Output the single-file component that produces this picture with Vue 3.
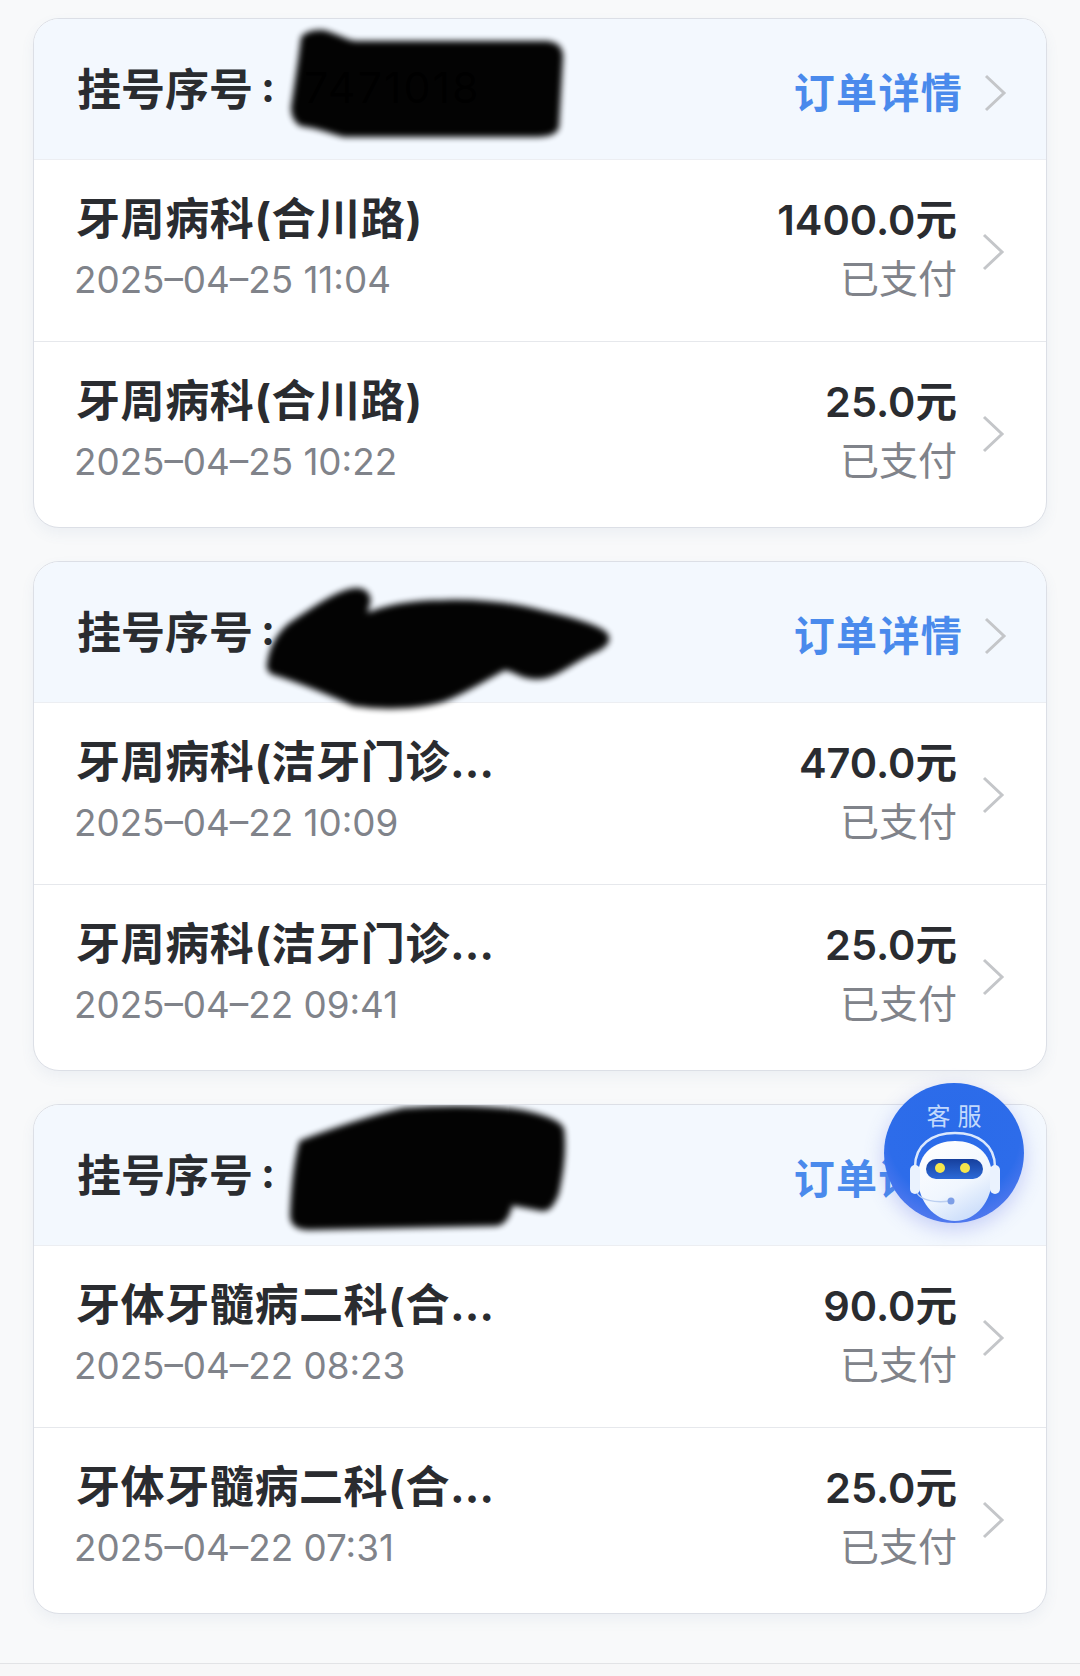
<template>
  <div class="page">
    <div v-for="card in cards" :key="card.shape" class="card">
      <div class="card-head">
        <span class="serial-label">挂号序号</span>
        <span class="serial-colon">:</span>
        <span class="serial-no">{{ card.serial }}</span>
        <span class="detail-link">订单详情</span>
        <svg class="chevron head-chevron" width="24" height="38" viewBox="0 0 24 38">
          <path d="M3 2 L21 19 L3 36" />
        </svg>
        <svg class="redact" viewBox="0 0 1014 142" width="1014" height="142">
          <path :d="card.shape" filter="url(#smear)" />
        </svg>
      </div>
      <div v-for="order in card.orders" :key="order.date" class="order">
        <div class="order-main">
          <div class="order-name">{{ order.name }}</div>
          <div class="order-date">{{ order.date }}</div>
        </div>
        <div class="order-side">
          <div class="order-price">{{ order.price }}</div>
          <div class="order-status">已支付</div>
        </div>
        <svg class="chevron row-chevron" width="24" height="38" viewBox="0 0 24 38">
          <path d="M3 2 L21 19 L3 36" />
        </svg>
      </div>
    </div>
    <div class="page-end"></div>

    <div class="service">
      <span class="service-text">客服</span>
      <svg width="140" height="140" viewBox="0 0 140 140">
        <defs>
          <linearGradient id="headFill" x1="0.2" y1="0" x2="0.7" y2="1">
            <stop offset="0" stop-color="#ffffff" />
            <stop offset="0.6" stop-color="#f0f6fe" />
            <stop offset="1" stop-color="#c9dcfa" />
          </linearGradient>
          <linearGradient id="visorFill" x1="0" y1="0" x2="0" y2="1">
            <stop offset="0" stop-color="#163f9c" />
            <stop offset="1" stop-color="#2c6ad8" />
          </linearGradient>
        </defs>
        <path d="M31 84 C31 62 48 50 71 50 C94 50 111 62 111 84" fill="none" stroke="#dbe8fd" stroke-width="2.5" />
        <path d="M71 58 C92 58 107 70 108 92 C109 118 92 138 71 138 C50 138 33 118 34 92 C35 70 50 58 71 58 Z" fill="url(#headFill)" />
        <rect x="42" y="76" width="57" height="20" rx="10" fill="url(#visorFill)" />
        <circle cx="56" cy="85" r="5" fill="#f5e64c" />
        <circle cx="81" cy="85" r="5" fill="#f5e64c" />
        <rect x="26" y="82" width="10" height="29" rx="5" fill="#eaf2fe" />
        <rect x="106" y="82" width="10" height="29" rx="5" fill="#eaf2fe" />
        <path d="M33 110 C37 117 50 120 66 118" fill="none" stroke="#bccff0" stroke-width="1.5" />
        <circle cx="67" cy="118" r="3.5" fill="#7d9ee6" />
      </svg>
    </div>

    <svg class="defs" width="0" height="0">
      <filter id="smear" x="-10%" y="-20%" width="120%" height="140%">
        <feGaussianBlur stdDeviation="3" />
      </filter>
    </svg>
  </div>
</template>

<script setup>
const cards = [
  {
    serial: '7471018',
    shape: 'M270 19 C276 14 282 14 288 14 C300 16 310 24 321 25 L513 25 C522 26 526 30 526 38 L522 108 C520 113 512 115 503 115 L310 115 C298 112 288 107 267 104 C262 100 260 95 260 89 L267 42 Z',
    orders: [
      { name: '牙周病科(合川路)', date: '2025–04–25 11:04', price: '1400.0元' },
      { name: '牙周病科(合川路)', date: '2025–04–25 10:22', price: '25.0元' }
    ]
  },
  {
    serial: '',
    shape: 'M236 102 C238 85 248 68 262 60 C280 48 305 30 322 29 C332 29 336 36 332 44 L329 56 C350 46 380 41 410 41 C445 40 480 44 510 52 C535 58 560 64 570 72 C576 78 570 84 555 90 C535 100 520 114 505 114 C490 116 482 106 470 105 C450 116 425 132 405 138 C380 145 345 145 320 141 C295 130 260 116 240 110 C236 108 235 106 236 102 Z',
    orders: [
      { name: '牙周病科(洁牙门诊部)', date: '2025–04–22 10:09', price: '470.0元' },
      { name: '牙周病科(洁牙门诊部)', date: '2025–04–22 09:41', price: '25.0元' }
    ]
  },
  {
    serial: '',
    shape: 'M268 38 C300 26 335 14 370 6 C410 3 450 3 487 8 C505 12 522 16 527 24 C530 45 526 70 522 88 C518 98 514 104 508 103 L476 97 C474 108 470 117 462 118 L275 122 C264 122 259 118 259 110 C260 85 262 60 268 38 Z',
    orders: [
      { name: '牙体牙髓病二科(合川路)', date: '2025–04–22 08:23', price: '90.0元' },
      { name: '牙体牙髓病二科(合川路)', date: '2025–04–22 07:31', price: '25.0元' }
    ]
  }
]
</script>

<style>
body {
  background: #f8f9fa;
}
</style>

<style scoped>
.page {
  position: relative;
  height: 1676px;
  box-sizing: border-box;
  padding: 18px 33px 0;
  background: #f8f9fa;
  font-family: Inter, "Noto Sans CJK SC", sans-serif;
  overflow: hidden;
}

.card {
  width: 1014px;
  box-sizing: border-box;
  margin-bottom: 33px;
  background: #fff;
  border: 1px solid #dcdfe6;
  border-radius: 26px;
  box-shadow: 0 6px 14px rgba(90, 110, 150, 0.07);
  overflow: hidden;
}

.card-head {
  position: relative;
  display: flex;
  align-items: center;
  height: 141px;
  box-sizing: border-box;
  padding: 0 39px 0 43px;
  background: #f3f8fe;
  border-bottom: 1px solid #eceef2;
}

.serial-label {
  margin-bottom: 4px;
  font: 700 44px "Noto Sans CJK SC", sans-serif;
  color: #2a2c30;
}

.serial-colon {
  margin: 0 0 6px 8px;
  font: 700 42px Inter, sans-serif;
  color: #2a2c30;
}

.serial-no {
  margin: 0 0 4px 29px;
  font: 400 43px Inter, sans-serif;
  letter-spacing: 2px;
  color: #111;
}

.detail-link {
  margin: 2px 0 0 auto;
  font: 700 41px "Noto Sans CJK SC", sans-serif;
  letter-spacing: 1.3px;
  color: #4a8aec;
}

.chevron {
  flex: none;
}

.chevron path {
  fill: none;
  stroke: #c4c6c9;
  stroke-width: 3;
}

.head-chevron {
  margin: 8px 0 0 20px;
}

.redact {
  position: absolute;
  left: 0;
  top: 0;
  overflow: visible;
  opacity: 0.985;
}

.redact path {
  fill: #000;
  stroke: #000;
  stroke-width: 6;
  stroke-linejoin: round;
}

.defs {
  position: absolute;
}

.order {
  display: flex;
  height: 182px;
  box-sizing: border-box;
  padding: 29px 41px 0 42px;
  border-bottom: 1px solid #e6e8ec;
}

.order:last-child {
  height: 185px;
  border-bottom: 0;
}

.order-main {
  width: 428px;
}

.order-name {
  overflow: hidden;
  font: 700 44px/60px Inter, "Noto Sans CJK SC", sans-serif;
  letter-spacing: 0.6px;
  color: #2a2c30;
  white-space: nowrap;
  text-overflow: ellipsis;
}

.order-date {
  margin: 9px 0 0 -2px;
  font: 400 36.8px/44px Inter, sans-serif;
  color: #80838a;
  white-space: nowrap;
}

.order-side {
  margin-left: auto;
  padding-top: 5px;
  text-align: right;
}

.order-price {
  height: 52px;
  font: 600 41.5px/52px Inter, "Noto Sans CJK SC", sans-serif;
  color: #2a2c30;
}

.order-status {
  margin-top: 6px;
  font: 400 39px/48px "Noto Sans CJK SC", sans-serif;
  color: #80838a;
}

.row-chevron {
  margin: 44px 0 0 24px;
}

.page-end {
  position: absolute;
  left: 0;
  right: 0;
  top: 1663px;
  height: 13px;
  background: #f7f7f8;
  border-top: 1px solid #e2e3e6;
}

.service {
  position: absolute;
  left: 884px;
  top: 1083px;
  width: 140px;
  height: 140px;
  border-radius: 50%;
  background: radial-gradient(circle at 50% 36%, #2a6be9 0%, #2d6cea 58%, #5a7cef 84%, #8f98f2 100%);
  box-shadow: 0 6px 20px rgba(90, 105, 230, 0.3);
  overflow: hidden;
}

.service-text {
  position: absolute;
  left: 0;
  right: 0;
  top: 17px;
  font: 400 24px/30px "Noto Sans CJK SC", sans-serif;
  letter-spacing: 7px;
  text-indent: 7px;
  text-align: center;
  color: #c2d9fc;
}

.service svg {
  position: absolute;
  left: 0;
  top: 0;
}
</style>
